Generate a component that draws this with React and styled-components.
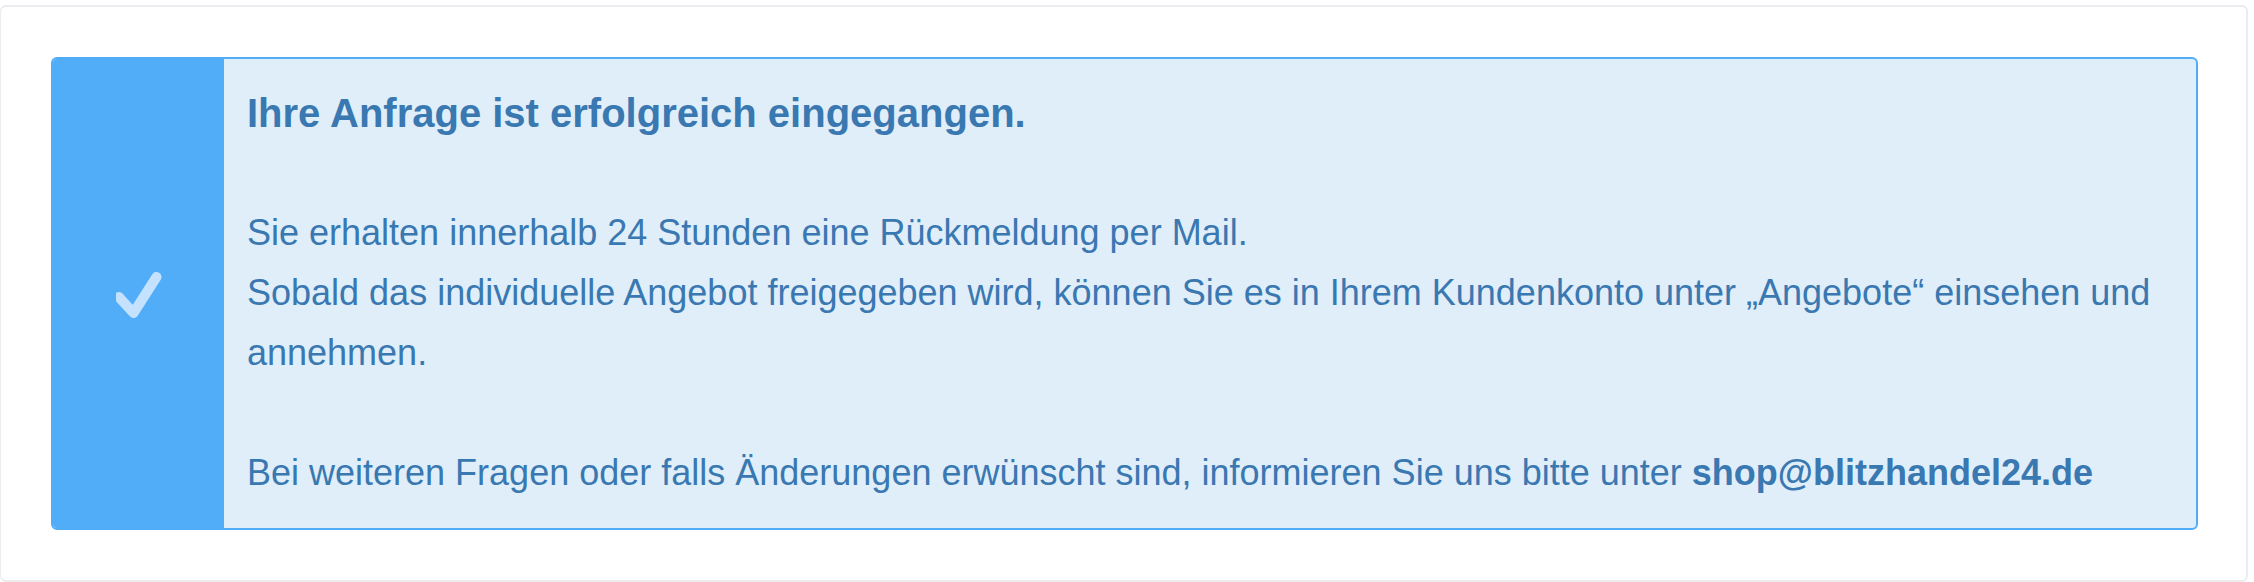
import React from "react";
import styled, { createGlobalStyle } from "styled-components";

const GlobalStyle = createGlobalStyle`
  html, body {
    margin: 0;
    padding: 0;
    background: #fff;
  }
  body {
    font-family: "Liberation Sans", Arial, Helvetica, sans-serif;
  }
`;

const Page = styled.div`
  padding: 5px 6px 0 0;
`;

const Card = styled.div`
  box-sizing: border-box;
  height: 577px;
  border: 2px solid #ebebf0;
  border-left-width: 1px;
  border-radius: 6px;
  padding: 50px 48px 0 50px;
  background: #fff;
`;

const Alert = styled.div`
  display: flex;
  border: 2px solid #52adf9;
  border-radius: 6px;
  overflow: hidden;
  background: #dfeef9;
`;

const IconCol = styled.div`
  flex: 0 0 171px;
  background: #52adf9;
  display: flex;
  align-items: center;
  justify-content: center;
`;

const Content = styled.div`
  flex: 1;
  padding: 24px 24px 25px 23px;
  color: #3a78b1;
  font-size: 36px;
  line-height: 60px;
`;

const Title = styled.div`
  font-size: 40px;
  font-weight: 700;
  margin-bottom: 60px;
`;

const Paragraph = styled.p`
  margin: 0 0 ${(p) => (p.$last ? "0" : "60px")};
`;

const Mail = styled.strong`
  font-weight: 700;
`;

const Check = () => (
  <svg width="46" height="50" viewBox="0 0 46 50">
    <polyline
      points="3,28 17.5,44 40.5,8"
      fill="none"
      stroke="#c4e2fd"
      strokeWidth="10"
      strokeLinecap="round"
      strokeLinejoin="round"
    />
  </svg>
);

export default function App() {
  return (
    <>
      <GlobalStyle />
      <Page>
        <Card>
          <Alert>
            <IconCol>
              <Check />
            </IconCol>
            <Content>
              <Title>Ihre Anfrage ist erfolgreich eingegangen.</Title>
              <Paragraph>
                Sie erhalten innerhalb 24 Stunden eine Rückmeldung per Mail.
                <br />
                Sobald das individuelle Angebot freigegeben wird, können Sie es
                in Ihrem Kundenkonto unter „Angebote“ einsehen und annehmen.
              </Paragraph>
              <Paragraph $last>
                Bei weiteren Fragen oder falls Änderungen erwünscht sind,
                informieren Sie uns bitte unter <Mail>shop@blitzhandel24.de</Mail>
              </Paragraph>
            </Content>
          </Alert>
        </Card>
      </Page>
    </>
  );
}
